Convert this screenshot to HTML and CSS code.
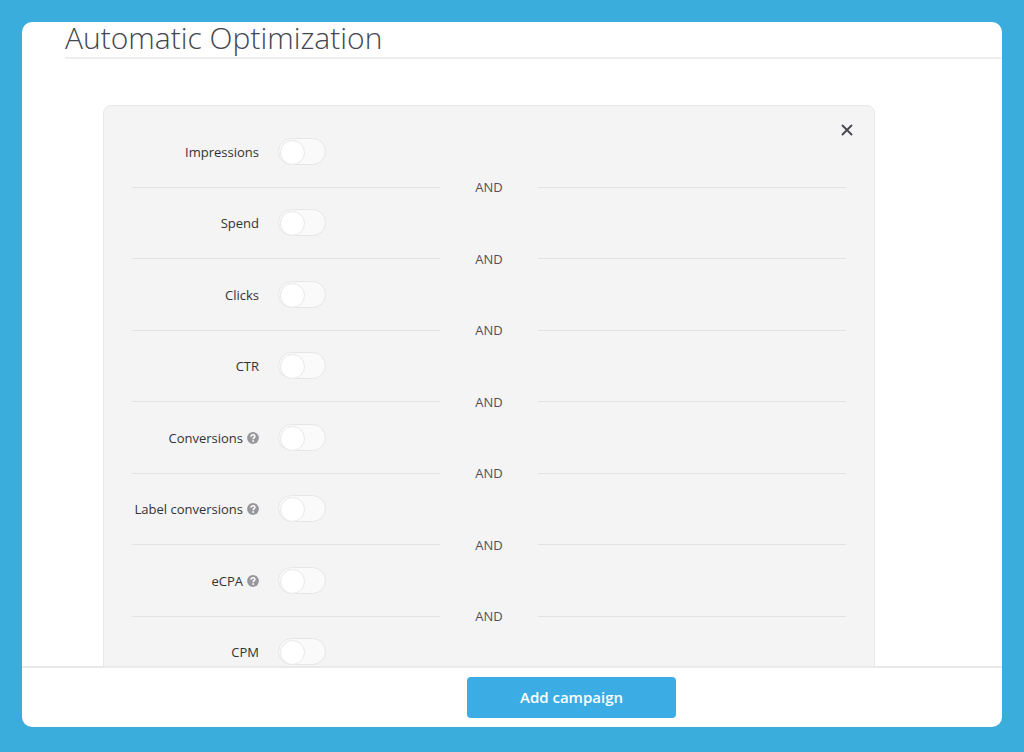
FILE: index.html
```html
<!DOCTYPE html>
<html lang="en">
<head>
  <meta charset="UTF-8">
  <meta name="viewport" content="width=device-width, initial-scale=1.0">
  <title>Automatic Optimization</title>
  <link rel="stylesheet" href="styles.css">
</head>
<body>
  <svg class="sprite" aria-hidden="true">
    <symbol id="icon-help" viewBox="0 0 12 12">
      <circle cx="6" cy="6" r="5.9" fill="#98989c"/>
      <path d="M4 4.700C4.100 3.400 5 2.800 6 2.800c1.100 0 1.900.6 1.900 1.600C7.900 5.600 6.100 5.700 6.100 7.200" fill="none" stroke="#fff" stroke-width="1.500"/>
      <circle cx="6.100" cy="9" r=".9" fill="#fff"/>
    </symbol>
  </svg>

  <main class="page">
    <div class="content">
      <h1 class="title">Automatic Optimization</h1>
      <form class="panel" id="rules">
        <button type="button" class="close" aria-label="Close">
          <svg width="12" height="12" viewBox="0 0 12 12"><path d="M1.500 1.500l9 9M10.500 1.500l-9 9" stroke="#45454f" stroke-width="1.800" stroke-linecap="round"/></svg>
        </button>
        <div class="rule">
          <label for="impressions">Impressions</label>
          <input type="checkbox" class="toggle" id="impressions">
        </div>
        <div class="and">AND</div>
        <div class="rule">
          <label for="spend">Spend</label>
          <input type="checkbox" class="toggle" id="spend">
        </div>
        <div class="and">AND</div>
        <div class="rule">
          <label for="clicks">Clicks</label>
          <input type="checkbox" class="toggle" id="clicks">
        </div>
        <div class="and">AND</div>
        <div class="rule">
          <label for="ctr">CTR</label>
          <input type="checkbox" class="toggle" id="ctr">
        </div>
        <div class="and">AND</div>
        <div class="rule">
          <label for="conversions">Conversions <svg class="help"><use href="#icon-help"/></svg></label>
          <input type="checkbox" class="toggle" id="conversions">
        </div>
        <div class="and">AND</div>
        <div class="rule">
          <label for="label-conversions">Label conversions <svg class="help"><use href="#icon-help"/></svg></label>
          <input type="checkbox" class="toggle" id="label-conversions">
        </div>
        <div class="and">AND</div>
        <div class="rule">
          <label for="ecpa">eCPA <svg class="help"><use href="#icon-help"/></svg></label>
          <input type="checkbox" class="toggle" id="ecpa">
        </div>
        <div class="and">AND</div>
        <div class="rule">
          <label for="cpm">CPM</label>
          <input type="checkbox" class="toggle" id="cpm">
        </div>
      </form>
    </div>
    <footer class="actions">
      <button type="submit" form="rules" class="add">Add campaign</button>
    </footer>
  </main>
</body>
</html>
```
FILE: styles.css
```css
* {
  box-sizing: border-box;
}
body {
  margin: 0;
  height: 100vh;
  padding: 22px 22px 25px;
  background: #3aaddc;
  font-family: "Open Sans", sans-serif;
  font-size: 13px;
  color: #333;
}
.sprite {
  display: none;
}
.page {
  display: flex;
  flex-direction: column;
  height: 100%;
  background: #fff;
  border-radius: 10px;
  overflow: hidden;
}

.content {
  flex: 1;
  min-height: 0;
  padding-left: 43px;
  overflow: hidden;
}
.title {
  margin: 0 0 46px;
  height: 37px;
  border-bottom: 2px solid #eee;
  font-size: 30px;
  font-weight: 300;
  line-height: 32px;
  color: #45454f;
}
.panel {
  position: relative;
  max-width: 772px;
  margin: 0 38px;
  padding: 32px 28px;
  background: #f4f4f4;
  border: 1px solid #e8e8e8;
  border-radius: 8px;
}
.close {
  position: absolute;
  top: 18px;
  right: 21px;
  display: flex;
  padding: 0;
  border: none;
  background: none;
  cursor: pointer;
}

.rule {
  display: flex;
  align-items: center;
  gap: 19px;
  height: 27px;
}
.rule label {
  display: flex;
  align-items: center;
  justify-content: flex-end;
  gap: 4px;
  width: 127px;
  white-space: nowrap;
}
.help {
  width: 12px;
  height: 12px;
}
.toggle {
  appearance: none;
  width: 48px;
  height: 27px;
  margin: 0;
  padding: 1px;
  border: 1px solid #e6e6e6;
  border-radius: 14px;
  background: #fafafa;
  cursor: pointer;
}
.toggle::before {
  content: "";
  display: block;
  width: 23px;
  height: 23px;
  border: 1px solid #e8e8e8;
  border-radius: 50%;
  background: #fff;
}
.toggle:checked {
  background: #3cade4;
}
.toggle:checked::before {
  margin-left: auto;
}

.and {
  display: flex;
  align-items: center;
  gap: 35px;
  height: 44px;
  color: #50505a;
}
.and:nth-of-type(4n) {
  height: 45px;
}
.and::before,
.and::after {
  content: "";
  flex: 1;
  height: 1px;
  background: #e3e3e3;
}

.actions {
  display: flex;
  justify-content: center;
  padding: 9px 0 9px 119px;
  border-top: 2px solid #e9e9e9;
}
.add {
  width: 209px;
  height: 41px;
  padding: 0 0 2px;
  border: none;
  border-radius: 4px;
  background: #3cade4;
  color: #fff;
  font-family: inherit;
  font-size: 15px;
  font-weight: 600;
  cursor: pointer;
}
```
